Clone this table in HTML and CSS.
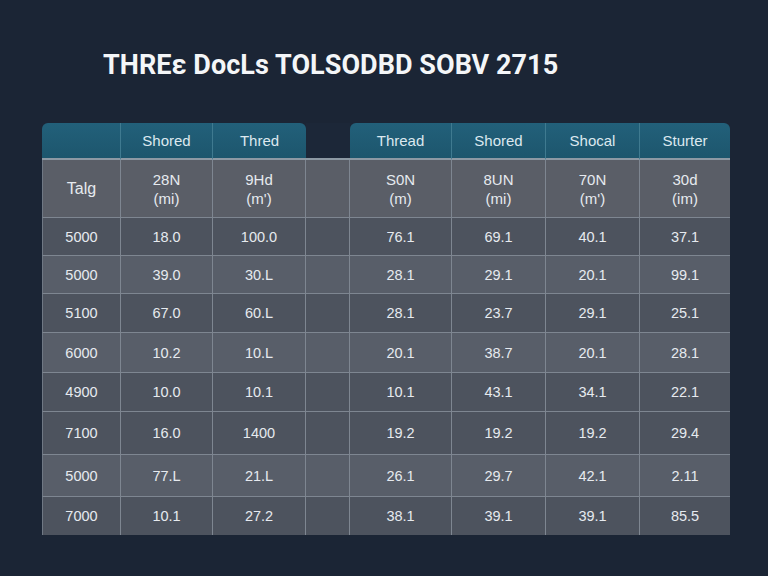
FILE: index.html
```html
<!DOCTYPE html>
<html>
<head>
<meta charset="utf-8">
<link rel="stylesheet" href="styles.css">
</head>
<body>
<main class="page">
  <h1 class="title">THREε DocLs TOLSODBD SOBV 2715</h1>
  <div class="grid">
    <div class="hd first"></div>
    <div class="hd">Shored</div>
    <div class="hd lastl">Thred</div>
    <div class="hd gap"></div>
    <div class="hd firstr">Thread</div>
    <div class="hd">Shored</div>
    <div class="hd">Shocal</div>
    <div class="hd last">Sturter</div>

    <div class="sub lead">Talg</div>
    <div class="sub">28N<br>(mi)</div>
    <div class="sub">9Hd<br>(m')</div>
    <div class="sub"></div>
    <div class="sub">S0N<br>(m)</div>
    <div class="sub">8UN<br>(mi)</div>
    <div class="sub">70N<br>(m')</div>
    <div class="sub end">30d<br>(im)</div>

    <div class="c d lead">5000</div><div class="c d">18.0</div><div class="c d">100.0</div><div class="c d"></div><div class="c d">76.1</div><div class="c d">69.1</div><div class="c d">40.1</div><div class="c d end">37.1</div>
    <div class="c l lead">5000</div><div class="c l">39.0</div><div class="c l">30.L</div><div class="c l"></div><div class="c l">28.1</div><div class="c l">29.1</div><div class="c l">20.1</div><div class="c l end">99.1</div>
    <div class="c d lead">5100</div><div class="c d">67.0</div><div class="c d">60.L</div><div class="c d"></div><div class="c d">28.1</div><div class="c d">23.7</div><div class="c d">29.1</div><div class="c d end">25.1</div>
    <div class="c l lead">6000</div><div class="c l">10.2</div><div class="c l">10.L</div><div class="c l"></div><div class="c l">20.1</div><div class="c l">38.7</div><div class="c l">20.1</div><div class="c l end">28.1</div>
    <div class="c d lead">4900</div><div class="c d">10.0</div><div class="c d">10.1</div><div class="c d"></div><div class="c d">10.1</div><div class="c d">43.1</div><div class="c d">34.1</div><div class="c d end">22.1</div>
    <div class="c d lead">7100</div><div class="c d">16.0</div><div class="c d">1400</div><div class="c d"></div><div class="c d">19.2</div><div class="c d">19.2</div><div class="c d">19.2</div><div class="c d end">29.4</div>
    <div class="c l lead">5000</div><div class="c l">77.L</div><div class="c l">21.L</div><div class="c l"></div><div class="c l">26.1</div><div class="c l">29.7</div><div class="c l">42.1</div><div class="c l end">2.11</div>
    <div class="c d lead bot">7000</div><div class="c d bot">10.1</div><div class="c d bot">27.2</div><div class="c d bot"></div><div class="c d bot">38.1</div><div class="c d bot">39.1</div><div class="c d bot">39.1</div><div class="c d end bot">85.5</div>
  </div>
</main>
</body>
</html>
```

FILE: styles.css
```css
html, body {
  margin: 0;
  padding: 0;
  background: #1b2535;
}
body {
  width: 768px;
  height: 576px;
  overflow: hidden;
  font-family: "Liberation Sans", Arial, sans-serif;
  color: #e6eaef;
}
.page {
  padding: 49px 0 0 42px;
}
.title {
  margin: 0 0 0 61px;
  font-family: Roboto, "Liberation Sans", sans-serif;
  font-weight: 700;
  font-size: 27px;
  line-height: 32px;
  color: #f4f6f8;
  letter-spacing: 0.05px;
}
.grid {
  margin-top: 42px;
  display: grid;
  grid-template-columns: 79px 92px 93px 44px 102px 94px 94px 90px;
  grid-template-rows: 37px 58px 38px 38px 39px 40px 39px 43px 42px 38px;
  width: 688px;
}
.hd {
  background: linear-gradient(#22607a, #1d566d);
  color: #dce8ef;
  font-size: 15px;
  display: flex;
  align-items: center;
  justify-content: center;
  border-right: 1px solid #3f7a90;
  border-bottom: 2px solid #8d99a4;
}
.hd.first { border-top-left-radius: 6px; }
.hd.lastl { border-top-right-radius: 6px; border-right: none; }
.hd.firstr { border-top-left-radius: 6px; }
.hd.last { border-top-right-radius: 6px; border-right: none; }
.hd.gap {
  background: #1c2738;
  border-right: none;
}
.sub, .c {
  display: flex;
  align-items: center;
  justify-content: center;
  text-align: center;
  font-size: 14.5px;
  border-right: 1px solid #7e8691;
  border-bottom: 1px solid #7e8691;
}
.sub {
  background: #5a5e67;
  line-height: 19px;
  font-size: 15px;
}
.sub.lead { font-size: 16px; }
.c.d { background: #4d535e; }
.c.l { background: #585e69; }
.lead { border-left: 1px solid #6f7884; }
.end { border-right: none; }
.bot { border-bottom: none; }
```
